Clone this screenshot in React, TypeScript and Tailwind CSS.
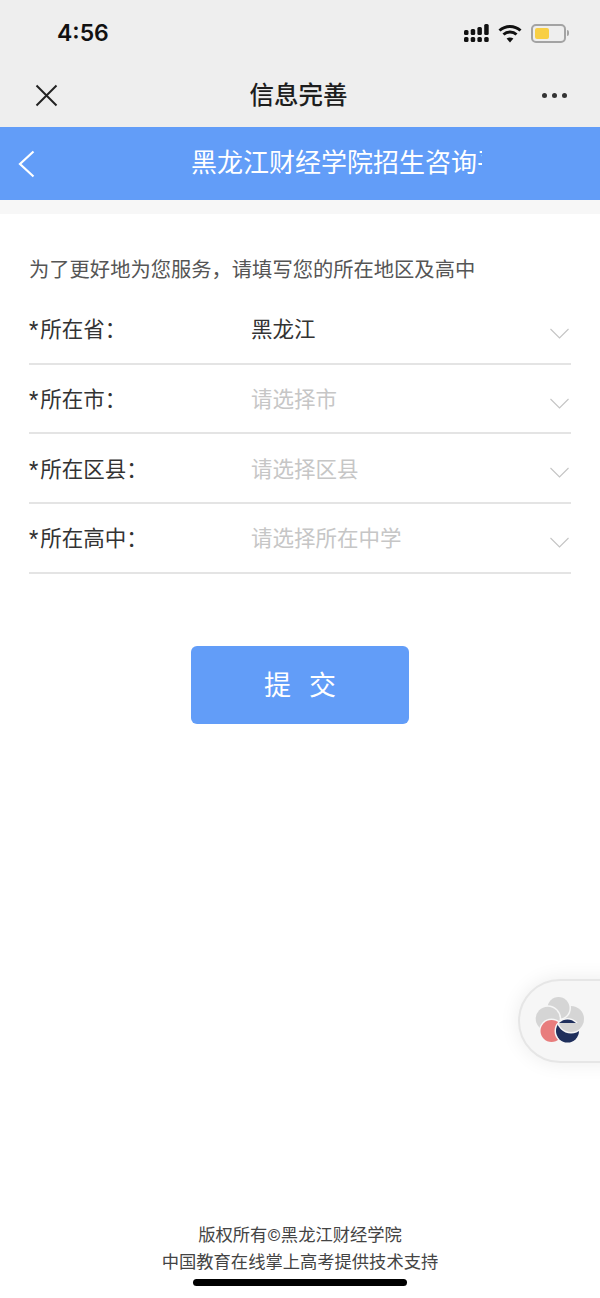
import React from 'react';

const FONT = "font-['Roboto','Noto_Sans_CJK_SC',sans-serif]";

const FIELDS = [
  { label: '所在省：', value: '黑龙江', filled: true },
  { label: '所在市：', value: '请选择市', filled: false },
  { label: '所在区县：', value: '请选择区县', filled: false },
  { label: '所在高中：', value: '请选择所在中学', filled: false },
];

const SignalIcon = () => (
  <svg width="25" height="19" viewBox="0 0 25 19" fill="#111">
    <rect x="0" y="6" width="4.5" height="5" rx="1.5" />
    <rect x="0" y="13" width="4.5" height="5" rx="1.5" />
    <rect x="6.7" y="5" width="4.5" height="6" rx="1.5" />
    <rect x="6.7" y="13" width="4.5" height="5" rx="1.5" />
    <rect x="13.4" y="3" width="4.5" height="8" rx="1.5" />
    <rect x="13.4" y="13" width="4.5" height="5" rx="1.5" />
    <rect x="20.2" y="0" width="4.5" height="11" rx="1.5" />
    <rect x="20.2" y="13" width="4.5" height="5" rx="1.5" />
  </svg>
);

const WifiIcon = () => (
  <svg width="24" height="19" viewBox="0 0 24 19" fill="none" stroke="#111" strokeWidth="3">
    <path d="M1.5 6.5C7.5 1 16.5 1 22.5 6.5" />
    <path d="M5.5 10.5C9 7.3 15 7.3 18.5 10.5" />
    <path d="M12 18.5L8.6 14.6C10.5 13 13.5 13 15.4 14.6Z" fill="#111" stroke="none" />
  </svg>
);

const BatteryIcon = () => (
  <div className="flex items-center gap-[1px]">
    <div className="w-[35px] h-[19px] rounded-[5px] border-2 border-[#a3a3a3] p-[2px] flex">
      <div className="w-[14px] bg-[#f8cf45] rounded-[2px]" />
    </div>
    <div className="w-[2px] h-[6px] bg-[#a3a3a3] rounded-r-sm" />
  </div>
);

const Chevron = ({ color = '#c4c4c4' }: { color?: string }) => (
  <svg width="19" height="11" viewBox="0 0 19 11" fill="none" stroke={color} strokeWidth="1.1">
    <path d="M0.5 1L9.5 10L18.5 1" />
  </svg>
);

// pinwheel, each petal cuts into the next one. the order is a cycle so the
// right petal is drawn a second time, clipped, to bite into the navy one
const FlowerLogo = () => (
  <svg width="50" height="50" viewBox="0 0 50 50" strokeWidth="3" stroke="#f6f6f6" paintOrder="stroke">
    <defs>
      <clipPath id="petal-clip">
        <rect x="0" y="27" width="50" height="23" />
      </clipPath>
    </defs>
    <circle cx="36" cy="23" r="13" fill="#d5d5d5" />
    <circle cx="23.5" cy="12" r="11" fill="#d5d5d5" />
    <circle cx="12.7" cy="22.7" r="12" fill="#d5d5d5" />
    <circle cx="16.5" cy="35" r="11" fill="#e87d7d" />
    <circle cx="32.5" cy="35" r="11.5" fill="#1f2f5c" />
    <circle cx="36" cy="23" r="13" fill="#d5d5d5" clipPath="url(#petal-clip)" />
  </svg>
);

const App: React.FC = () => {
  return (
    <div className={`${FONT} relative w-[600px] h-[1298px] bg-white flex flex-col overflow-hidden`}>
      {/* wechat chrome */}
      <div className="bg-[#eeeeee] h-[127px] shrink-0">
        <div className="h-[66px] pl-[57px] pr-[31px] flex items-center justify-between">
          <span className="text-[23px] font-semibold text-[#111] font-['Inter',sans-serif]">4:56</span>
          <div className="flex items-center">
            <SignalIcon />
            <div className="ml-[9px] mr-[9px]">
              <WifiIcon />
            </div>
            <BatteryIcon />
          </div>
        </div>
        <div className="h-[61px] pl-[35px] pr-[33px] flex items-center justify-between">
          <div className="-mt-[2px]">
            <svg width="23" height="23" viewBox="0 0 23 23" stroke="#222" strokeWidth="2" fill="none">
              <path d="M1.5 1.5L21.5 21.5M21.5 1.5L1.5 21.5" />
            </svg>
          </div>
          <span className="text-[24.5px] font-medium text-[#1d1d1d] mr-[3px]">信息完善</span>
          <div className="flex gap-[5px] -mt-[2px]">
            <span className="w-[5px] h-[5px] rounded-full bg-[#333]" />
            <span className="w-[5px] h-[5px] rounded-full bg-[#333]" />
            <span className="w-[5px] h-[5px] rounded-full bg-[#333]" />
          </div>
        </div>
      </div>

      {/* header bar */}
      <div className="h-[73px] shrink-0 bg-[#629df8] flex items-center pl-[18px]">
        <svg width="17" height="28" viewBox="0 0 17 28" fill="none" stroke="#fff" strokeWidth="2.2">
          <path d="M15.5 1.5L2 14L15.5 26.5" />
        </svg>
        <div className="ml-[156px] w-[291px] overflow-hidden whitespace-nowrap text-[26px] text-white">
          黑龙江财经学院招生咨询平台
        </div>
      </div>
      <div className="h-[14px] shrink-0 bg-[#f7f7f7]" />

      {/* form */}
      <div className="px-[29px] pt-[41px]">
        <p className="text-[20.3px] leading-[30px] text-[#555]">为了更好地为您服务，请填写您的所在地区及高中</p>
        <div className="mt-[10px]">
          {FIELDS.map(f => (
            <div key={f.label} className="h-[69.7px] border-b-2 border-[#e4e4e4] flex items-center text-[21.5px]">
              <span className="w-[223px] text-[#333] mt-[3px]">
                <span className="mr-[2px]">*</span>
                {f.label}
              </span>
              <span className={`flex-1 mt-[3px] -ml-[1px] ${f.filled ? 'text-[#333]' : 'text-[#c6c6c6]'}`}>{f.value}</span>
              <div className="mr-[2px] mt-[9px]">
                <Chevron />
              </div>
            </div>
          ))}
        </div>
        <div className="flex justify-center mt-[72px]">
          <button className="w-[218px] h-[78px] rounded-[6px] bg-[#629df8] text-white text-[27px] tracking-[18px] pl-[18px] pt-[2px]">
            提交
          </button>
        </div>
      </div>

      {/* footer */}
      <div className="mt-auto pb-[12px] flex flex-col items-center text-[17.3px] leading-[27px] text-[#444]">
        <p>版权所有©黑龙江财经学院</p>
        <p>中国教育在线掌上高考提供技术支持</p>
        <div className="mt-[3px] w-[214px] h-[7px] rounded-full bg-black" />
      </div>

      {/* floating service button */}
      <div className="absolute left-[518px] top-[979px] w-[100px] h-[84px] rounded-l-[42px] bg-[#f6f6f6] border-2 border-[#e6e6e6] shadow-[0_0_20px_rgba(0,0,0,0.08)] flex items-center pl-[15px]">
        <FlowerLogo />
      </div>
    </div>
  );
};

export default App;
